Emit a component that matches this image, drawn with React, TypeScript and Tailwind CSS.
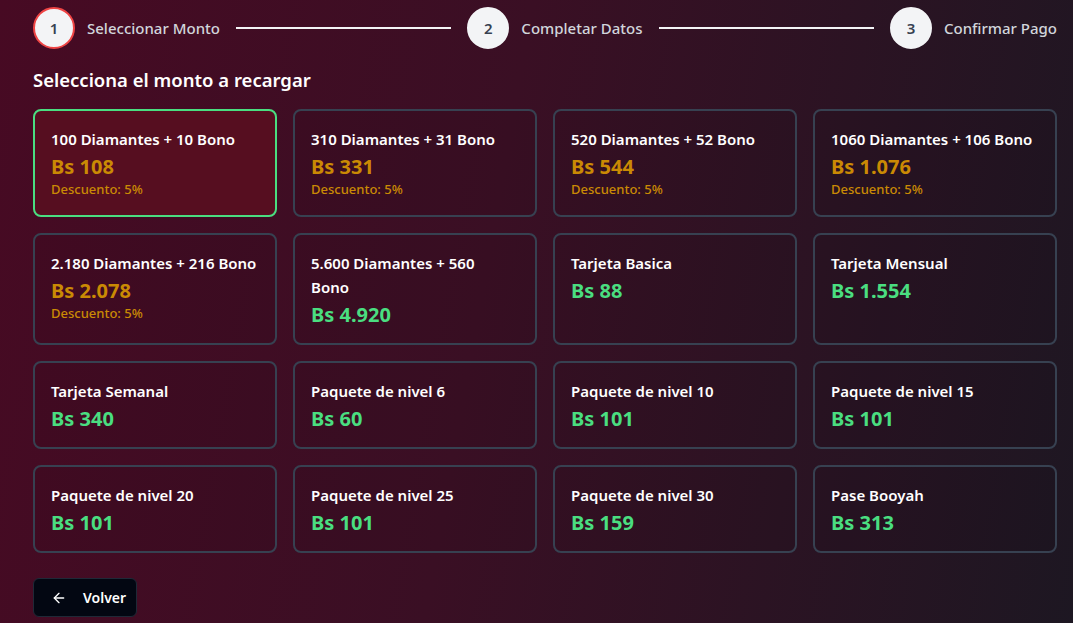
import { Fragment } from 'react'
import { ArrowLeft } from 'lucide-react'

type Pack = {
  title: string
  price: string
  discount?: string
}

// the \n keeps the same break the original shows for the long title
const packs: Pack[] = [
  { title: '100 Diamantes + 10 Bono', price: 'Bs 108', discount: 'Descuento: 5%' },
  { title: '310 Diamantes + 31 Bono', price: 'Bs 331', discount: 'Descuento: 5%' },
  { title: '520 Diamantes + 52 Bono', price: 'Bs 544', discount: 'Descuento: 5%' },
  { title: '1060 Diamantes + 106 Bono', price: 'Bs 1.076', discount: 'Descuento: 5%' },
  { title: '2.180 Diamantes + 216 Bono', price: 'Bs 2.078', discount: 'Descuento: 5%' },
  { title: '5.600 Diamantes + 560\nBono', price: 'Bs 4.920' },
  { title: 'Tarjeta Basica', price: 'Bs 88' },
  { title: 'Tarjeta Mensual', price: 'Bs 1.554' },
  { title: 'Tarjeta Semanal', price: 'Bs 340' },
  { title: 'Paquete de nivel 6', price: 'Bs 60' },
  { title: 'Paquete de nivel 10', price: 'Bs 101' },
  { title: 'Paquete de nivel 15', price: 'Bs 101' },
  { title: 'Paquete de nivel 20', price: 'Bs 101' },
  { title: 'Paquete de nivel 25', price: 'Bs 101' },
  { title: 'Paquete de nivel 30', price: 'Bs 159' },
  { title: 'Pase Booyah', price: 'Bs 313' },
]

const steps = ['Seleccionar Monto', 'Completar Datos', 'Confirmar Pago']

const Stepper = () => (
  <div className="flex items-center">
    {steps.map((label, i) => (
      <Fragment key={label}>
        <div
          className={
            i === 0
              ? 'flex h-[42px] w-[42px] shrink-0 items-center justify-center rounded-full border-2 border-[#ef4444] bg-[#f3f4f6] text-[15px] font-semibold text-[#374151]'
              : 'flex h-[42px] w-[42px] shrink-0 items-center justify-center rounded-full border-2 border-[#f3f4f6] bg-[#f3f4f6] text-[15px] font-semibold text-[#374151]'
          }
        >
          {i + 1}
        </div>
        <span className="ml-3 whitespace-nowrap text-[15px] font-medium text-[#d1d5db]">{label}</span>
        {i < steps.length - 1 && <div className="mx-4 h-[2px] flex-1 bg-[#f3f4f6]" />}
      </Fragment>
    ))}
  </div>
)

export default function App() {
  return (
    <div
      className="min-h-[623px] w-full bg-[linear-gradient(100deg,#470a23_0%,#3a0f24_45%,#1d1722_100%)] pb-6 pl-[33px] pr-[16px] pt-[7px] text-white"
      style={{ fontFamily: '"Segoe UI", "Noto Sans", "Open Sans", sans-serif' }}
    >
      <Stepper />

      <h2 className="mt-[17px] text-[18.5px] font-semibold leading-7 text-white">Selecciona el monto a recargar</h2>

      <div className="mt-[15px] grid grid-cols-4 gap-4">
        {packs.map((p, i) => (
          <button
            key={p.title}
            className={
              i === 0
                ? 'flex flex-col items-start rounded-lg border-2 border-[#4ade80] bg-[#560e20] p-4 text-left'
                : 'flex flex-col items-start rounded-lg border-2 border-[#374151] bg-black/5 p-4 text-left'
            }
          >
            <span className="whitespace-pre-line text-[15px] font-semibold leading-6 text-white">{p.title}</span>
            <span
              className={
                p.discount
                  ? 'translate-y-[2px] text-xl font-bold leading-7 text-[#ca8a04]'
                  : 'translate-y-[2px] text-xl font-bold leading-7 text-[#4ade80]'
              }
            >
              {p.price}
            </span>
            {p.discount && <span className="text-[13px] font-medium leading-5 text-[#ca8a04]">{p.discount}</span>}
          </button>
        ))}
      </div>

      <button className="mt-[25px] flex h-[39px] w-[104px] items-center gap-4 rounded-md border border-[#1f2937] bg-[#030712] pl-[17px] text-sm font-semibold text-white">
        <ArrowLeft className="h-4 w-4 shrink-0" strokeWidth={2} />
        Volver
      </button>
    </div>
  )
}
